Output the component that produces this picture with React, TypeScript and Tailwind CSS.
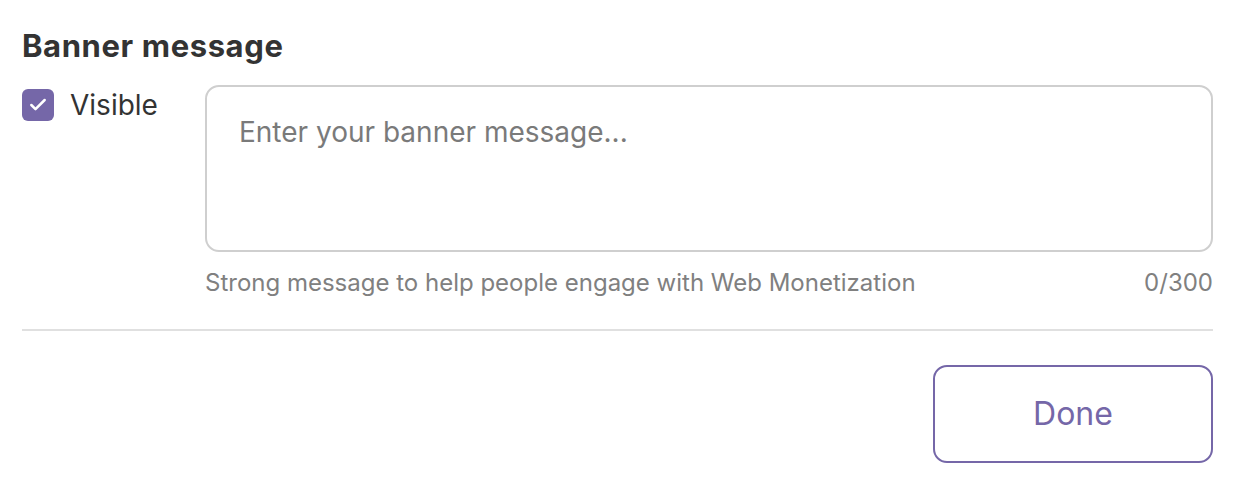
import { Check } from 'lucide-react';

export default function App() {
    return (
        <div className="w-[1242px] h-[483px] bg-white pl-[22px] pr-[29px] pt-[26px] font-['Inter',sans-serif] text-[#333]">
            {/* Title */}
            <h2 className="text-[31px] leading-[40px] font-bold tracking-[0.6px] text-[#333]">Banner message</h2>

            {/* Visible + message */}
            <div className="flex mt-[19px]">
                <label className="w-[183px] shrink-0 flex items-start gap-4 pt-1">
                    <span className="w-8 h-8 rounded-md bg-[#7567a8] flex items-center justify-center">
                        <Check className="w-5 h-5 text-white" strokeWidth={3} />
                    </span>
                    <span className="text-[28px] leading-8 text-[#333]">Visible</span>
                </label>

                <div className="flex-1 flex flex-col">
                    <textarea
                        className="h-[167px] w-full resize-none rounded-[14px] border-2 border-[#cfcfcf] px-[32px] pt-[29px] pb-4 text-[28px] leading-8 text-[#333] placeholder:text-[#7a7a7a] outline-none"
                        placeholder="Enter your banner message..."
                    />
                    <div className="flex justify-between mt-[13px] text-[24px] leading-[36px] text-[#808080]">
                        <span>Strong message to help people engage with Web Monetization</span>
                        <span>0/300</span>
                    </div>
                </div>
            </div>

            {/* Divider */}
            <div className="h-[2px] bg-[#e0e0e0] mt-[28px]" />

            {/* Actions */}
            <div className="flex justify-end mt-[34px]">
                <button className="w-[280px] h-[98px] rounded-[14px] border-2 border-[#7567a8] text-[32px] text-[#7567a8]">
                    Done
                </button>
            </div>
        </div>
    );
}
